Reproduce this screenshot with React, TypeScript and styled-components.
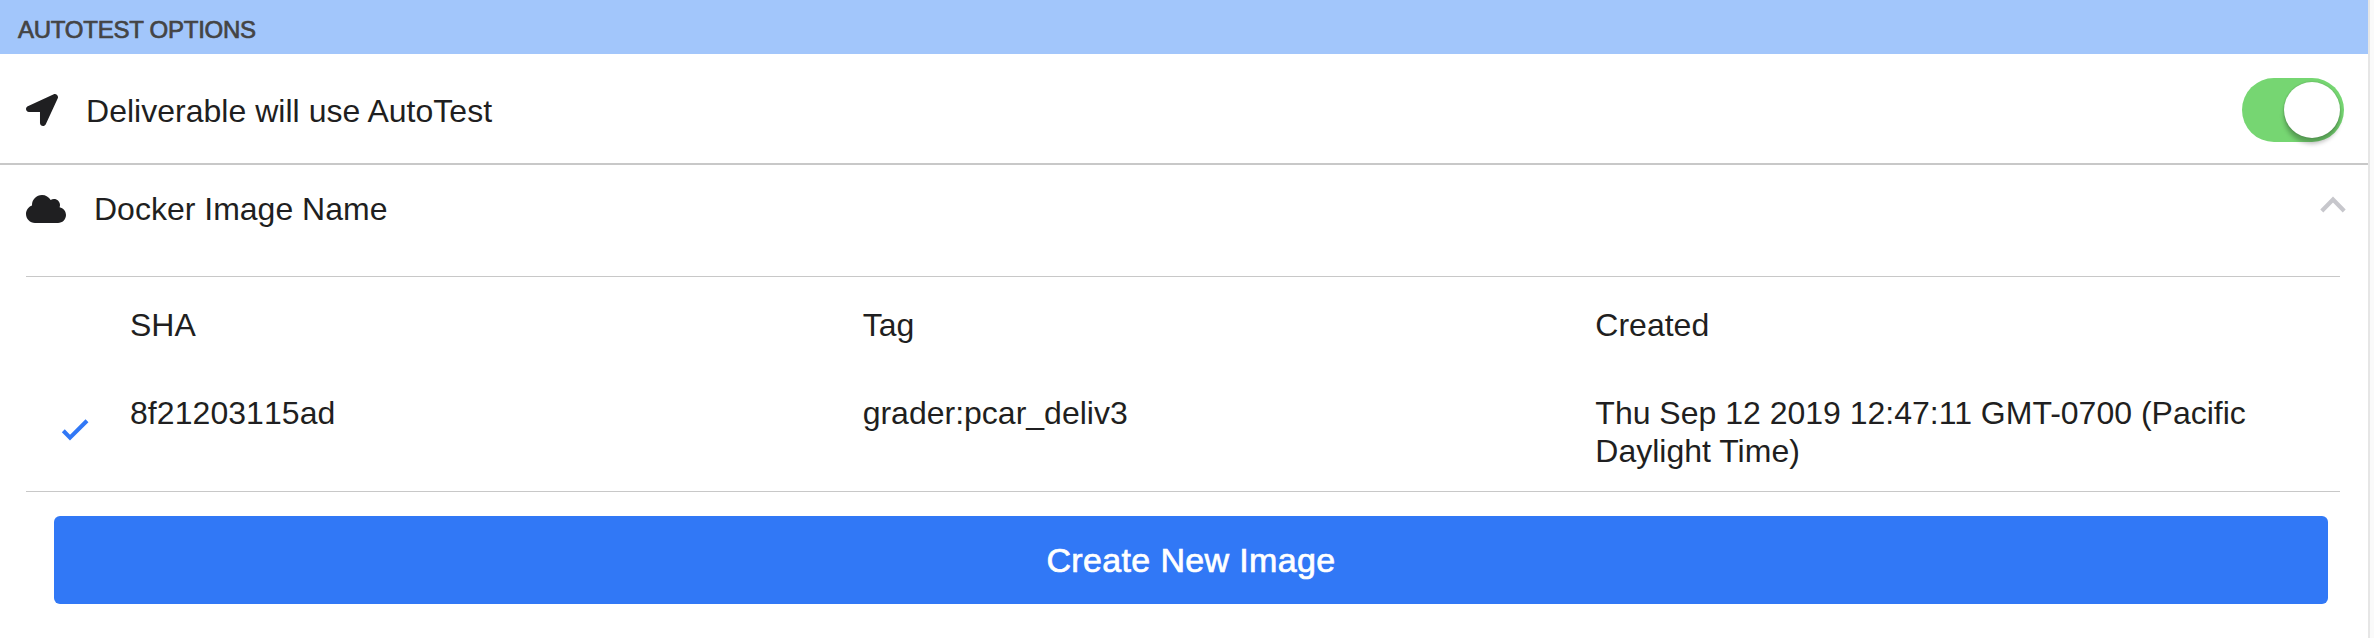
import React from "react";
import styled, { createGlobalStyle } from "styled-components";
import { FaCloud, FaLocationArrow } from "react-icons/fa";

const GlobalStyle = createGlobalStyle`
  * { box-sizing: border-box; }
  body {
    margin: 0;
    background: #fafafa;
    color: #1f1f21;
    font-family: "Liberation Sans", Arial, sans-serif;
    font-size: 32px;
    line-height: 38px;
  }
`;

const Page = styled.main`
  width: 2370px;
  height: 638px;
  background: #fff;
  border-right: 2px solid #e6e6e6;
`;

const Header = styled.header`
  display: flex;
  align-items: center;
  height: 54px;
  padding: 5px 18px 0;
  background: #a2c6fb;
  color: #444;
  font-size: 24px;
  line-height: 30px;
  -webkit-text-stroke: 0.7px #444;
`;

const Title = styled.span<{ $tracking?: number }>`
  letter-spacing: ${(p) => p.$tracking ?? 0}px;
  white-space: nowrap;
`;

const OptionRow = styled.section`
  display: flex;
  align-items: center;
  height: 111px;
  padding: 2px 24px 0 26px;
  border-bottom: 2px solid #c8c8c8;
`;

const OptionTitle = styled(Title)`
  padding-top: 2px;
`;

const ImageRow = styled(OptionRow)`
  padding: 0 22px 24px 26px;
  border-bottom: 0;
`;

const Icon = styled.span<{ $width: number; $size: number }>`
  display: flex;
  width: ${(p) => p.$width}px;
  font-size: ${(p) => p.$size}px;
`;

const Switch = styled.button`
  display: flex;
  justify-content: flex-end;
  width: 102px;
  height: 64px;
  margin-left: auto;
  padding: 4px;
  border: 0;
  border-radius: 32px;
  background: #76d672;
`;

const Knob = styled.span`
  width: 56px;
  height: 56px;
  border-radius: 50%;
  background: #fff;
  box-shadow: 0 0 2px rgba(0, 0, 0, 0.25), 0 6px 4px rgba(0, 0, 0, 0.25);
`;

const Chevron = styled.svg`
  width: 26px;
  height: 17px;
  margin-left: auto;
  margin-bottom: 8px;
`;

const Images = styled.section`
  width: 2314px;
  height: 216px;
  margin: 0 26px;
  padding: 29px 12px 0 0;
  border-top: 1px solid #c8c8c8;
  border-bottom: 1px solid #c8c8c8;
`;

const ImageLine = styled.div`
  display: grid;
  grid-template-columns: 104px repeat(3, 1fr);
  & + & { margin-top: 50px; }
`;

const Sha = styled.span`
  font-kerning: none;
  letter-spacing: 0.06px;
`;

const Check = styled.svg`
  width: 28px;
  height: 23px;
  margin: 25px 0 0 35px;
`;

const CreateButton = styled.button`
  display: flex;
  align-items: center;
  justify-content: center;
  width: 2274px;
  height: 88px;
  margin: 24px 0 0 54px;
  padding: 0;
  border: 0;
  border-radius: 6px;
  background: #3178f6;
  color: #fff;
  font: inherit;
  font-size: 34px;
  -webkit-text-stroke: 0.7px #fff;
`;

export default function App() {
  return (
    <>
      <GlobalStyle />
      <Page>
        <Header>
          <Title $tracking={-0.25}>AUTOTEST OPTIONS</Title>
        </Header>
        <OptionRow>
          <Icon $width={60} $size={32}><FaLocationArrow /></Icon>
          <OptionTitle $tracking={0.02}>Deliverable will use AutoTest</OptionTitle>
          <Switch aria-label="Use AutoTest"><Knob /></Switch>
        </OptionRow>
        <ImageRow>
          <Icon $width={68} $size={40}><FaCloud /></Icon>
          <Title>Docker Image Name</Title>
          <Chevron viewBox="0 0 26 17">
            <path d="M1.8 15 13 3.5 24.2 15" fill="none" stroke="#c7c7cc" strokeWidth="4.2" />
          </Chevron>
        </ImageRow>
        <Images>
          <ImageLine>
            <span />
            <Title>SHA</Title>
            <Title>Tag</Title>
            <Title>Created</Title>
          </ImageLine>
          <ImageLine>
            <Check viewBox="0 0 28 23">
              <path d="M2.3 11.8 9 18.6 26 1.8" fill="none" stroke="#3178f6" strokeWidth="4.1" />
            </Check>
            <Sha>8f21203115ad</Sha>
            <span>grader:pcar_deliv3</span>
            <span>Thu Sep 12 2019 12:47:11 GMT-0700 (Pacific Daylight Time)</span>
          </ImageLine>
        </Images>
        <CreateButton><Title $tracking={0.36}>Create New Image</Title></CreateButton>
      </Page>
    </>
  );
}
